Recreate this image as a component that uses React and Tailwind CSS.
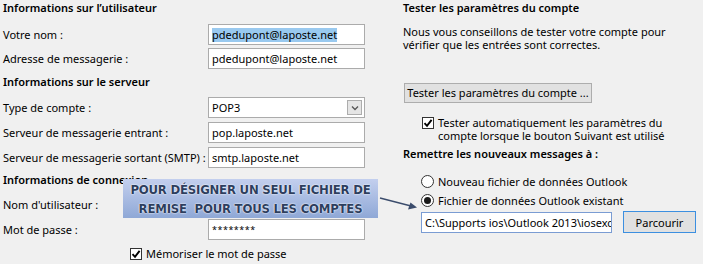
import React from 'react';

const font = { fontFamily: '"Noto Sans", "Open Sans", sans-serif' };

function Box({ children, className = '' }) {
    return (
        <div className={`h-[21px] w-[157px] border border-[#ababab] bg-white pl-[3px] flex items-center text-black overflow-hidden whitespace-nowrap ${className}`}>
            {children}
        </div>
    );
}

function Row({ label, children, className = '' }) {
    return (
        <div className={`flex items-center ${className}`}>
            <div className="w-[208px] pl-[3px] whitespace-nowrap">{label}</div>
            {children}
        </div>
    );
}

function Heading({ children, className = '' }) {
    return <div className={`h-[16px] leading-[16px] text-[11px] font-semibold whitespace-nowrap ${className}`}>{children}</div>;
}

function Check() {
    return (
        <span className="w-[12px] h-[12px] border border-[#333] bg-white flex items-center justify-center shrink-0">
            <svg width="10" height="10" viewBox="0 0 10 10">
                <path d="M1.5 5.2 L4 7.8 L8.6 1.8" stroke="#000" strokeWidth="1.9" fill="none" />
            </svg>
        </span>
    );
}

function Radio({ on }) {
    return (
        <span className="w-[13px] h-[13px] rounded-full border border-[#333] bg-white flex items-center justify-center shrink-0">
            {on && <span className="w-[7px] h-[7px] rounded-full bg-[#1a1a1a]" />}
        </span>
    );
}

export default function App() {
    return (
        <div className="relative w-[703px] h-[264px] bg-[#f0f0f0] text-[11px] leading-[13px] text-black overflow-hidden" style={font}>
            <div className="flex">
                {/* colonne gauche */}
                <div className="w-[380px] shrink-0">
                    <Heading className="pl-[3px]">Informations sur l’utilisateur</Heading>
                    <Row label="Votre nom :" className="mt-[8px]">
                        <Box>
                            <span className="bg-[#99c9ef] leading-[14px]">pdedupont@laposte.net</span>
                        </Box>
                    </Row>
                    <Row label="Adresse de messagerie :" className="mt-[3px]">
                        <Box>pdedupont@laposte.net</Box>
                    </Row>
                    <Heading className="pl-[3px] mt-[5px]">Informations sur le serveur</Heading>
                    <Row label="Type de compte :" className="mt-[7px]">
                        <Box className="justify-between pr-[2px]">
                            <span>POP3</span>
                            <span className="w-[15px] h-[15px] border border-[#adadad] bg-[#e5e5e5] flex items-center justify-center">
                                <svg width="8" height="6" viewBox="0 0 8 6">
                                    <path d="M1 1.5 L4 4.5 L7 1.5" stroke="#555" strokeWidth="1.3" fill="none" />
                                </svg>
                            </span>
                        </Box>
                    </Row>
                    <Row label="Serveur de messagerie entrant :" className="mt-[4px]">
                        <Box>pop.laposte.net</Box>
                    </Row>
                    <Row label="Serveur de messagerie sortant (SMTP) :" className="mt-[4px]">
                        <Box>smtp.laposte.net</Box>
                    </Row>
                    <Heading className="pl-[3px] mt-[4px]">Informations de connexion</Heading>
                    <Row label="Nom d'utilisateur :" className="mt-[6px]">
                        <Box>pdedupont</Box>
                    </Row>
                    <Row label="Mot de passe :" className="mt-[4px]">
                        <Box className="text-[9px] tracking-[0.5px]">********</Box>
                    </Row>
                    <div className="flex items-center gap-[4px] pl-[130px] mt-[7px] whitespace-nowrap">
                        <Check />
                        <span>Mémoriser le mot de passe</span>
                    </div>
                </div>

                {/* colonne droite */}
                <div className="pl-[23px] flex-1">
                    <Heading>Tester les paramètres du compte</Heading>
                    <p className="mt-[9px]">
                        Nous vous conseillons de tester votre compte pour<br />
                        vérifier que les entrées sont correctes.
                    </p>
                    <button className="mt-[32px] ml-[1px] w-[188px] h-[20px] border border-[#adadad] bg-[#e1e1e1] leading-[18px] whitespace-nowrap">
                        Tester les paramètres du compte ...
                    </button>
                    <div className="flex gap-[4px] pl-[19px] mt-[13px] whitespace-nowrap">
                        <span className="mt-[1px]"><Check /></span>
                        <span>
                            Tester automatiquement les paramètres du<br />
                            compte lorsque le bouton Suivant est utilisé
                        </span>
                    </div>
                    <Heading className="mt-[4px]">Remettre les nouveaux messages à :</Heading>
                    <div className="flex items-center gap-[4px] pl-[18px] mt-[13px] whitespace-nowrap">
                        <Radio />
                        <span>Nouveau fichier de données Outlook</span>
                    </div>
                    <div className="flex items-center gap-[4px] pl-[18px] mt-[6px] whitespace-nowrap">
                        <Radio on />
                        <span>Fichier de données Outlook existant</span>
                    </div>
                    <div className="flex items-start pl-[18px] mt-[5px]">
                        <div className="w-[191px] h-[21px] border border-[#7a9cd3] bg-white pl-[3px] flex items-center overflow-hidden whitespace-nowrap">
                            C:\Supports ios\Outlook 2013\iosexchange.pst
                        </div>
                        <button className="ml-[11px] -mt-[1px] w-[73px] h-[22px] border border-[#3c8fe0] bg-[#e1e1e1]">Parcourir</button>
                    </div>
                </div>
            </div>

            {/* bandeau annotation */}
            <div
                className="absolute left-[123px] top-[179px] w-[255px] h-[39px] bg-gradient-to-b from-[#c3cfee] to-[#8fa8d6] flex flex-col items-center justify-center text-[13px] leading-[19px] font-bold text-[#2d3e5e] whitespace-pre tracking-[-0.2px]"
                style={{ fontFamily: '"DejaVu Sans", sans-serif', fontStretch: 'condensed', textShadow: '0 0 2px #fff, 0 0 1px #fff' }}
            >
                <span>POUR DÉSIGNER UN SEUL FICHIER DE</span>
                <span>REMISE  POUR TOUS LES COMPTES</span>
            </div>
            <svg className="absolute left-[378px] top-[195px]" width="44" height="16" viewBox="0 0 44 16">
                <line x1="2" y1="3" x2="33" y2="11" stroke="#3b4c6c" strokeWidth="1.3" />
                <path d="M39 12.5 L30 14.5 L32.5 7.5 Z" fill="#3b4c6c" />
            </svg>
        </div>
    );
}
